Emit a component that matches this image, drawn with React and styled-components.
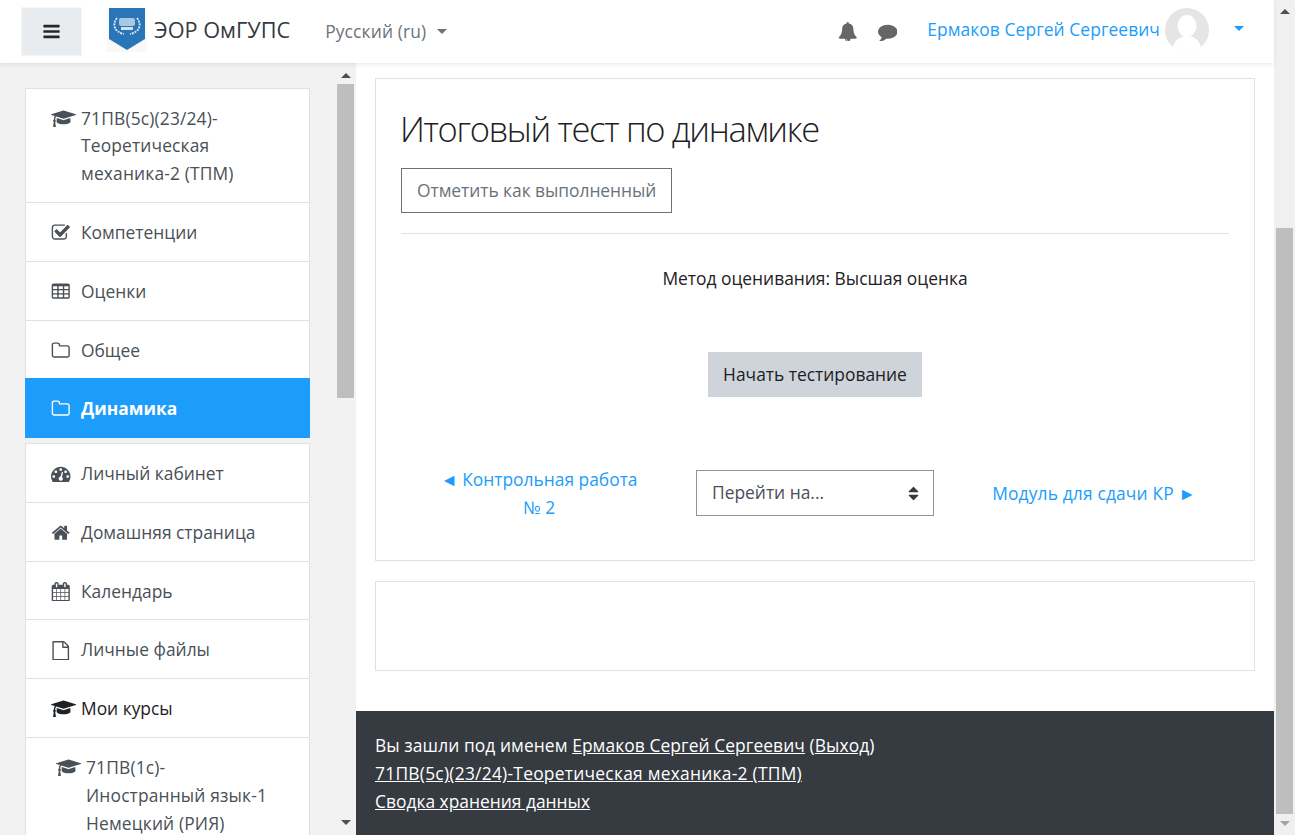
import React from "react";
import styled, { createGlobalStyle } from "styled-components";

const GlobalStyle = createGlobalStyle`
  html, body {
    margin: 0;
    height: 100%;
    overflow: hidden;
    background: #fff;
  }
  body {
    font-family: "Open Sans", "Liberation Sans", sans-serif;
    font-size: 17.4px;
    line-height: 27.8px;
    color: #1d2125;
  }
  * { box-sizing: border-box; }
`;

// font awesome 4 glyph outlines, the newer packs draw these differently
const paths = {
  bars: "M1664 1344v128q0 26-19 45t-45 19h-1408q-26 0-45-19t-19-45v-128q0-26 19-45t45-19h1408q26 0 45 19t19 45zm0-512v128q0 26-19 45t-45 19h-1408q-26 0-45-19t-19-45v-128q0-26 19-45t45-19h1408q26 0 45 19t19 45zm0-512v128q0 26-19 45t-45 19h-1408q-26 0-45-19t-19-45v-128q0-26 19-45t45-19h1408q26 0 45 19t19 45z",
  bell: "M912 1696q0-16-16-16-59 0-101.5-42.5t-42.5-101.5q0-16-16-16t-16 16q0 73 51.5 124.5t124.5 51.5q16 0 16-16zm816-288q0 52-38 90t-90 38h-448q0 106-75 181t-181 75-181-75-75-181h-448q-52 0-90-38t-38-90q50-42 91-88t85-119.5 74.5-158.5 50-206 19.5-260q0-152 117-282.5t307-158.5q-8-19-8-39 0-40 28-68t68-28 68 28 28 68q0 20-8 39 190 28 307 158.5t117 282.5q0 139 19.5 260t50 206 74.5 158.5 85 119.5 91 88z",
  comment: "M1792 896q0 174-120 321.5t-326 233-450 85.5q-70 0-145-8-198 175-460 242-49 14-114 22-17 2-30.5-9t-17.5-29v-1q-3-4-.5-12t2-10 4.5-9.5l6-9 7-8.5 8-9q7-8 31-34.5t34.5-38 31-39.5 32.5-51 27-59 26-76q-157-89-247.5-220t-90.5-281q0-130 71-248.5t191-204.5 286-136.5 348-50.5q244 0 450 85.5t326 233 120 321.5z",
  cap: "M1774 836l18 316q4 69-82 128t-235 93.5-323 34.5-323-34.5-235-93.5-82-128l18-316 574 181q22 7 48 7t48-7zm530-324q0 23-22 31l-1120 352q-4 1-10 1t-10-1l-652-206q-43 34-71 111.5t-34 178.5q63 36 63 109 0 69-58 107l58 433q2 14-8 25-9 11-24 11h-192q-15 0-24-11-10-11-8-25l58-433q-58-38-58-107 0-73 65-111 11-207 98-330l-333-104q-22-8-22-31t22-31l1120-352q4-1 10-1t10 1l1120 352q22 8 22 31z",
  check: "M1472 930v318q0 119-84.5 203.5t-203.5 84.5h-832q-119 0-203.5-84.5t-84.5-203.5v-832q0-119 84.5-203.5t203.5-84.5h832q63 0 117 25 15 7 18 23 3 17-9 29l-49 49q-10 10-23 10-3 0-9-2-23-6-45-6h-832q-66 0-113 47t-47 113v832q0 66 47 113t113 47h832q66 0 113-47t47-113v-254q0-13 9-22l64-64q10-10 23-10 6 0 12 3 20 8 20 29zm231-489l-814 814q-24 24-57 24t-57-24l-430-430q-24-24-24-57t24-57l110-110q24-24 57-24t57 24l263 263 647-647q24-24 57-24t57 24l110 110q24 24 24 57t-24 57z",
  table: "M576 1376v-192q0-14-9-23t-23-9h-320q-14 0-23 9t-9 23v192q0 14 9 23t23 9h320q14 0 23-9t9-23zm0-384v-192q0-14-9-23t-23-9h-320q-14 0-23 9t-9 23v192q0 14 9 23t23 9h320q14 0 23-9t9-23zm512 384v-192q0-14-9-23t-23-9h-320q-14 0-23 9t-9 23v192q0 14 9 23t23 9h320q14 0 23-9t9-23zm-512-768v-192q0-14-9-23t-23-9h-320q-14 0-23 9t-9 23v192q0 14 9 23t23 9h320q14 0 23-9t9-23zm512 384v-192q0-14-9-23t-23-9h-320q-14 0-23 9t-9 23v192q0 14 9 23t23 9h320q14 0 23-9t9-23zm512 384v-192q0-14-9-23t-23-9h-320q-14 0-23 9t-9 23v192q0 14 9 23t23 9h320q14 0 23-9t9-23zm-512-768v-192q0-14-9-23t-23-9h-320q-14 0-23 9t-9 23v192q0 14 9 23t23 9h320q14 0 23-9t9-23zm512 384v-192q0-14-9-23t-23-9h-320q-14 0-23 9t-9 23v192q0 14 9 23t23 9h320q14 0 23-9t9-23zm0-384v-192q0-14-9-23t-23-9h-320q-14 0-23 9t-9 23v192q0 14 9 23t23 9h320q14 0 23-9t9-23zm128-320v1088q0 66-47 113t-113 47h-1344q-66 0-113-47t-47-113v-1088q0-66 47-113t113-47h1344q66 0 113 47t47 113z",
  folder: "M1600 1312v-704q0-40-28-68t-68-28h-704q-40 0-68-28t-28-68v-64q0-40-28-68t-68-28h-320q-40 0-68 28t-28 68v960q0 40 28 68t68 28h1216q40 0 68-28t28-68zm128-704v704q0 92-66 158t-158 66h-1216q-92 0-158-66t-66-158v-960q0-92 66-158t158-66h320q92 0 158 66t66 158v32h672q92 0 158 66t66 158z",
  dashboard: "M384 1152q0-53-37.5-90.5t-90.5-37.5-90.5 37.5-37.5 90.5 37.5 90.5 90.5 37.5 90.5-37.5 37.5-90.5zm192-448q0-53-37.5-90.5t-90.5-37.5-90.5 37.5-37.5 90.5 37.5 90.5 90.5 37.5 90.5-37.5 37.5-90.5zm428 481l101-382q6-26-7.5-48.5t-38.5-29.5-48 6.5-30 39.5l-101 382q-60 5-107 43.5t-63 98.5q-20 77 20 146t117 89 146-20 89-117q16-60-6-117t-72-91zm660-33q0-53-37.5-90.5t-90.5-37.5-90.5 37.5-37.5 90.5 37.5 90.5 90.5 37.5 90.5-37.5 37.5-90.5zm-640-640q0-53-37.5-90.5t-90.5-37.5-90.5 37.5-37.5 90.5 37.5 90.5 90.5 37.5 90.5-37.5 37.5-90.5zm448 192q0-53-37.5-90.5t-90.5-37.5-90.5 37.5-37.5 90.5 37.5 90.5 90.5 37.5 90.5-37.5 37.5-90.5zm320 448q0 261-141 483-19 29-54 29h-1402q-35 0-54-29-141-221-141-483 0-182 71-348t191-286 286-191 348-71 348 71 286 191 191 286 71 348z",
  home: "M1472 992v480q0 26-19 45t-45 19h-384v-384h-256v384h-384q-26 0-45-19t-19-45v-480q0-1 .5-3t.5-3l575-474 575 474q1 2 1 6zm223-69l-62 74q-8 9-21 11h-3q-13 0-21-7l-692-577-692 577q-12 8-24 7-13-2-21-11l-62-74q-8-10-7-23.5t11-21.5l719-599q32-26 76-26t76 26l244 204v-195q0-14 9-23t23-9h192q14 0 23 9t9 23v408l219 182q10 8 11 21.5t-7 23.5z",
  calendar: "M192 1664h288v-288h-288v288zm352 0h320v-288h-320v288zm-352-352h288v-320h-288v320zm352 0h320v-320h-320v320zm-352-384h288v-288h-288v288zm736 736h320v-288h-320v288zm-384-736h320v-288h-320v288zm768 736h288v-288h-288v288zm-384-352h320v-320h-320v320zm-352-864v-288q0-13-9.5-22.5t-22.5-9.5h-64q-13 0-22.5 9.5t-9.5 22.5v288q0 13 9.5 22.5t22.5 9.5h64q13 0 22.5-9.5t9.5-22.5zm736 864h288v-320h-288v320zm-384-384h320v-288h-320v288zm384 0h288v-288h-288v288zm32-480v-288q0-13-9.5-22.5t-22.5-9.5h-64q-13 0-22.5 9.5t-9.5 22.5v288q0 13 9.5 22.5t22.5 9.5h64q13 0 22.5-9.5t9.5-22.5zm384-64v1280q0 52-38 90t-90 38h-1408q-52 0-90-38t-38-90v-1280q0-52 38-90t90-38h128v-96q0-66 47-113t113-47h64q66 0 113 47t47 113v96h384v-96q0-66 47-113t113-47h64q66 0 113 47t47 113v96h128q52 0 90 38t38 90z",
  file: "M1596 380q28 28 48 76t20 88v1152q0 40-28 68t-68 28h-1344q-40 0-68-28t-28-68v-1600q0-40 28-68t68-28h896q40 0 88 20t76 48zm-444-244v376h376q-10-29-22-41l-313-313q-12-12-41-22zm384 1528v-1024h-416q-40 0-68-28t-28-68v-416h-768v1536h1280z",
  sort: "M1408 1088q0 26-19 45l-448 448q-19 19-45 19t-45-19l-448-448q-19-19-19-45t19-45 45-19h896q26 0 45 19t19 45zm0-384q0 26-19 45t-45 19h-896q-26 0-45-19t-19-45 19-45l448-448q19-19 45-19t45 19l448 448q19 19 19 45z"
};

const Glyph = styled.svg`
  fill: currentColor;
  flex: none;
  display: block;
  height: ${(p) => p.$size}px;
`;

const Icon = ({ name, size = 19.5 }) => {
  const w = name === "cap" ? 2304 : 1792;
  return (
    <Glyph
      $size={size}
      viewBox={`0 0 ${w} 1792`}
      width={(size * w) / 1792}
      height={size}
    >
      <path d={paths[name]} />
    </Glyph>
  );
};

const Page = styled.div`
  width: 1295px;
  height: 835px;
  display: flex;
  overflow: hidden;
`;

const Viewport = styled.div`
  width: 1274px;
  height: 835px;
  display: flex;
  flex-direction: column;
`;

const Navbar = styled.header`
  height: 63px;
  flex: none;
  display: flex;
  align-items: center;
  padding: 0 0 0 21px;
  background: #fff;
  box-shadow: 0 2px 4px rgba(0, 0, 0, 0.08);
  position: relative;
  z-index: 2;
`;

const MenuButton = styled.button`
  width: 61px;
  height: 49px;
  margin-top: -1px;
  border: 1px solid #f4f6f7;
  background: #e9ecef;
  color: #23282c;
  display: flex;
  align-items: center;
  justify-content: center;
  padding: 0;
`;

const Brand = styled.a`
  display: flex;
  align-items: center;
  gap: 7px;
  margin-left: 25px;
  margin-top: -3px;
  font-size: 21.7px;
  color: #343a40;
`;

const BrandText = styled.span`
  margin-top: -1px;
`;

const Lang = styled.div`
  margin-left: 35px;
  display: flex;
  align-items: center;
  gap: 11px;
  color: #6a737b;
  letter-spacing: 0.15px;
`;

const Caret = styled.span`
  width: 0;
  height: 0;
  border-left: 5px solid transparent;
  border-right: 5px solid transparent;
  border-top: 5px solid ${(p) => p.$color || "#6a737b"};
`;

const NavRight = styled.div`
  margin-left: auto;
  display: flex;
  align-items: center;
  color: #666;
`;

const NavIcon = styled.span`
  display: flex;
  margin-right: ${(p) => p.$gap}px;
`;

const UserName = styled.a`
  color: #1c9cfb;
  letter-spacing: 0.08px;
  margin-top: -3px;
`;

const Avatar = styled.svg`
  width: 44px;
  height: 44px;
  margin: -4px 25px 0 5px;
`;

const UserCaret = styled.span`
  margin-right: 30px;
  margin-top: -6px;
  display: flex;
`;

const Body = styled.div`
  flex: 1;
  min-height: 0;
  display: flex;
`;

const Sidebar = styled.aside`
  width: 356px;
  flex: none;
  display: flex;
  background: #f2f2f2;
  overflow: hidden;
`;

const SideList = styled.nav`
  width: 337px;
  flex: none;
  padding: 24.6px 27px 0 25px;
  display: flex;
  flex-direction: column;
  gap: 5px;
`;

const NavCard = styled.ul`
  list-style: none;
  margin: 0;
  padding: 0;
  background: #fff;
  border: 1px solid #dee2e6;
  flex: none;
`;

const NavItem = styled.li`
  display: flex;
  padding: 16px ${(p) => (p.$indent ? 30 : 20)}px 14px ${(p) => (p.$indent ? 30 : 25)}px;
  color: ${(p) => (p.$dark ? "#1d2125" : "#495057")};
  border-top: ${(p) => (p.$first ? "none" : "1px solid #dee2e6")};
  ${(p) =>
    p.$active &&
    `
    background: #1c9cfb;
    color: #fff;
    font-weight: 700;
    margin: 0 -1px -1px;
    border-top: none;
    padding: 16.8px 20px 15px 26px;
  `}
`;

const IconSlot = styled.span`
  width: 30px;
  flex: none;
  height: 27.8px;
  display: flex;
  align-items: center;
`;

const CourseName = styled.span`
  letter-spacing: 0.15px;
`;

const ScrollTrack = styled.div`
  flex: none;
  display: flex;
  flex-direction: column;
  align-items: center;
  background: ${(p) => p.$bg};
  width: ${(p) => p.$width}px;
  padding-top: ${(p) => p.$pad}px;
`;

const ArrowUp = styled.span`
  width: 0;
  height: 0;
  border-left: 5px solid transparent;
  border-right: 5px solid transparent;
  border-bottom: 5px solid #505050;
`;

const ArrowDown = styled.span`
  width: 0;
  height: 0;
  border-left: 5px solid transparent;
  border-right: 5px solid transparent;
  border-top: 5px solid ${(p) => p.$color};
`;

const Thumb = styled.div`
  width: 17px;
  background: #bebebe;
  height: ${(p) => p.$height}px;
  margin-top: ${(p) => p.$top}px;
  margin-bottom: ${(p) => p.$bottom}px;
`;

const Main = styled.main`
  flex: 1;
  min-width: 0;
  display: flex;
  flex-direction: column;
  padding-top: 15px;
  background: #fff;
`;

const Card = styled.section`
  margin: 0 19px;
  border: 1px solid #dee2e6;
  background: #fff;
`;

const QuizCard = styled(Card)`
  height: 483px;
  padding: 25px 25px 0;
  display: flex;
  flex-direction: column;
`;

const EmptyCard = styled(Card)`
  height: 90px;
  margin-top: 20px;
`;

const Title = styled.h2`
  margin: 0 0 0 -1px;
  font-size: 34.5px;
  line-height: 50px;
  font-weight: 300;
  letter-spacing: -1.33px;
`;

const CompleteButton = styled.button`
  align-self: flex-start;
  height: 45px;
  margin-top: 14px;
  padding: 0 15px;
  border: 1px solid #6a737b;
  background: #fff;
  color: #6a737b;
  font: inherit;
  letter-spacing: -0.04px;
`;

const Divider = styled.hr`
  width: 100%;
  margin: 20px 0 0;
  border: 0;
  border-top: 1px solid #dee2e6;
`;

const Method = styled.p`
  margin: 31px 0 0;
  text-align: center;
`;

const StartButton = styled.button`
  align-self: center;
  height: 45px;
  margin-top: 59px;
  padding: 1px 15px 0;
  border: 0;
  background: #ced4da;
  color: #1d2125;
  font: inherit;
`;

const ActivityNav = styled.div`
  margin-top: 68px;
  display: grid;
  grid-template-columns: repeat(3, 1fr);
  align-items: center;
  text-align: center;
`;

const ActivityLink = styled.a`
  color: #1c9cfb;
  justify-self: center;
  max-width: 216px;
  padding: 1px 0 0 ${(p) => p.$shift || 0}px;
  letter-spacing: ${(p) => p.$spacing || 0}px;
`;

const JumpSelect = styled.div`
  justify-self: center;
  width: 238px;
  height: 46px;
  padding: 0 15px;
  display: flex;
  align-items: center;
  justify-content: space-between;
  border: 1px solid #8f959e;
  color: #495057;
  svg {
    color: #343a40;
    margin-right: -4px;
  }
`;

const Footer = styled.footer`
  margin-top: 40px;
  flex: 1;
  padding: 20px 19px 0;
  background: #363a41;
  color: #fff;
  a {
    color: #fff;
    text-decoration: underline;
  }
`;

const FooterLine = styled.div`
  line-height: 28px;
  letter-spacing: ${(p) => p.$spacing || 0}px;
`;

const Logo = () => (
  <svg width="40" height="44" viewBox="0 0 40 44">
    <rect width="40" height="44" fill="#f8f8f6" />
    <path d="M2 0 H38 V31 L20 42 L2 31 Z" fill="#2a75b8" />
    <g fill="none" stroke="#e4eef6" strokeWidth="1.8" strokeDasharray="2 1">
      <path d="M10 10 C5 16 7 24 17 26" />
      <path d="M30 10 C35 16 33 24 23 26" />
    </g>
    <rect x="12" y="10" width="16" height="8" rx="2" fill="#a9c8e2" />
    <rect x="14" y="19" width="12" height="3" fill="#cfe0ef" />
  </svg>
);

const AvatarIcon = () => (
  <Avatar viewBox="0 0 44 44">
    <defs>
      <clipPath id="avatar-circle">
        <circle cx="22" cy="22" r="22" />
      </clipPath>
    </defs>
    <g clipPath="url(#avatar-circle)">
      <rect width="44" height="44" fill="#e5e5e5" />
      <ellipse cx="22" cy="18" rx="9.5" ry="11" fill="#fff" />
      <path d="M7 44 C8 32 15 28 22 28 C29 28 36 32 37 44 Z" fill="#fff" />
    </g>
  </Avatar>
);

const topItems = [
  { icon: "check", label: "Компетенции" },
  { icon: "table", label: "Оценки" },
  { icon: "folder", label: "Общее" }
];

const siteItems = [
  { icon: "dashboard", label: "Личный кабинет" },
  { icon: "home", label: "Домашняя страница" },
  { icon: "calendar", label: "Календарь" },
  { icon: "file", label: "Личные файлы" }
];

const App = () => (
  <Page>
    <GlobalStyle />
    <Viewport>
      <Navbar>
        <MenuButton>
          <Icon name="bars" size={19} />
        </MenuButton>
        <Brand>
          <Logo />
          <BrandText>ЭОР ОмГУПС</BrandText>
        </Brand>
        <Lang>
          Русский (ru)
          <Caret />
        </Lang>
        <NavRight>
          <NavIcon $gap={20}>
            <Icon name="bell" />
          </NavIcon>
          <NavIcon $gap={30}>
            <Icon name="comment" />
          </NavIcon>
          <UserName>Ермаков Сергей Сергеевич</UserName>
          <AvatarIcon />
          <UserCaret>
            <Caret $color="#1c9cfb" />
          </UserCaret>
        </NavRight>
      </Navbar>
      <Body>
        <Sidebar>
          <SideList>
            <NavCard>
              <NavItem $first>
                <IconSlot>
                  <Icon name="cap" />
                </IconSlot>
                <CourseName>
                  71ПВ(5с)(23/24)-Теоретическая механика-2 (ТПМ)
                </CourseName>
              </NavItem>
              {topItems.map((item) => (
                <NavItem key={item.label}>
                  <IconSlot>
                    <Icon name={item.icon} />
                  </IconSlot>
                  <span>{item.label}</span>
                </NavItem>
              ))}
              <NavItem $active>
                <IconSlot>
                  <Icon name="folder" />
                </IconSlot>
                <span>Динамика</span>
              </NavItem>
            </NavCard>
            <NavCard>
              {siteItems.map((item, i) => (
                <NavItem key={item.label} $first={i === 0}>
                  <IconSlot>
                    <Icon name={item.icon} />
                  </IconSlot>
                  <span>{item.label}</span>
                </NavItem>
              ))}
              <NavItem $dark>
                <IconSlot>
                  <Icon name="cap" />
                </IconSlot>
                <span>Мои курсы</span>
              </NavItem>
              <NavItem $indent>
                <IconSlot>
                  <Icon name="cap" />
                </IconSlot>
                <CourseName>71ПВ(1с)-Иностранный язык-1 Немецкий (РИЯ)</CourseName>
              </NavItem>
            </NavCard>
          </SideList>
          <ScrollTrack $bg="#f2f2f2" $width={17} $pad={10}>
            <ArrowUp />
            <Thumb $top={6} $height={314} $bottom={422} />
            <ArrowDown $color="#505050" />
          </ScrollTrack>
        </Sidebar>
        <Main>
          <QuizCard>
            <Title>Итоговый тест по динамике</Title>
            <CompleteButton>Отметить как выполненный</CompleteButton>
            <Divider />
            <Method>Метод оценивания: Высшая оценка</Method>
            <StartButton>Начать тестирование</StartButton>
            <ActivityNav>
              <ActivityLink>◄ Контрольная работа № 2</ActivityLink>
              <JumpSelect>
                Перейти на...
                <Icon name="sort" size={17} />
              </JumpSelect>
              <ActivityLink $shift={6} $spacing={0.15}>
                Модуль для сдачи КР ►
              </ActivityLink>
            </ActivityNav>
          </QuizCard>
          <EmptyCard />
          <Footer>
            <FooterLine $spacing={0.08}>
              Вы зашли под именем <a>Ермаков Сергей Сергеевич</a> (<a>Выход</a>)
            </FooterLine>
            <FooterLine $spacing={0.25}>
              <a>71ПВ(5с)(23/24)-Теоретическая механика-2 (ТПМ)</a>
            </FooterLine>
            <FooterLine>
              <a>Сводка хранения данных</a>
            </FooterLine>
          </Footer>
        </Main>
      </Body>
    </Viewport>
    <ScrollTrack $bg="#f0f0f0" $width={21} $pad={9}>
      <ArrowUp />
      <Thumb $top={214} $height={586} $bottom={7} />
      <ArrowDown $color="#a3a3a3" />
    </ScrollTrack>
  </Page>
);

export default App;
